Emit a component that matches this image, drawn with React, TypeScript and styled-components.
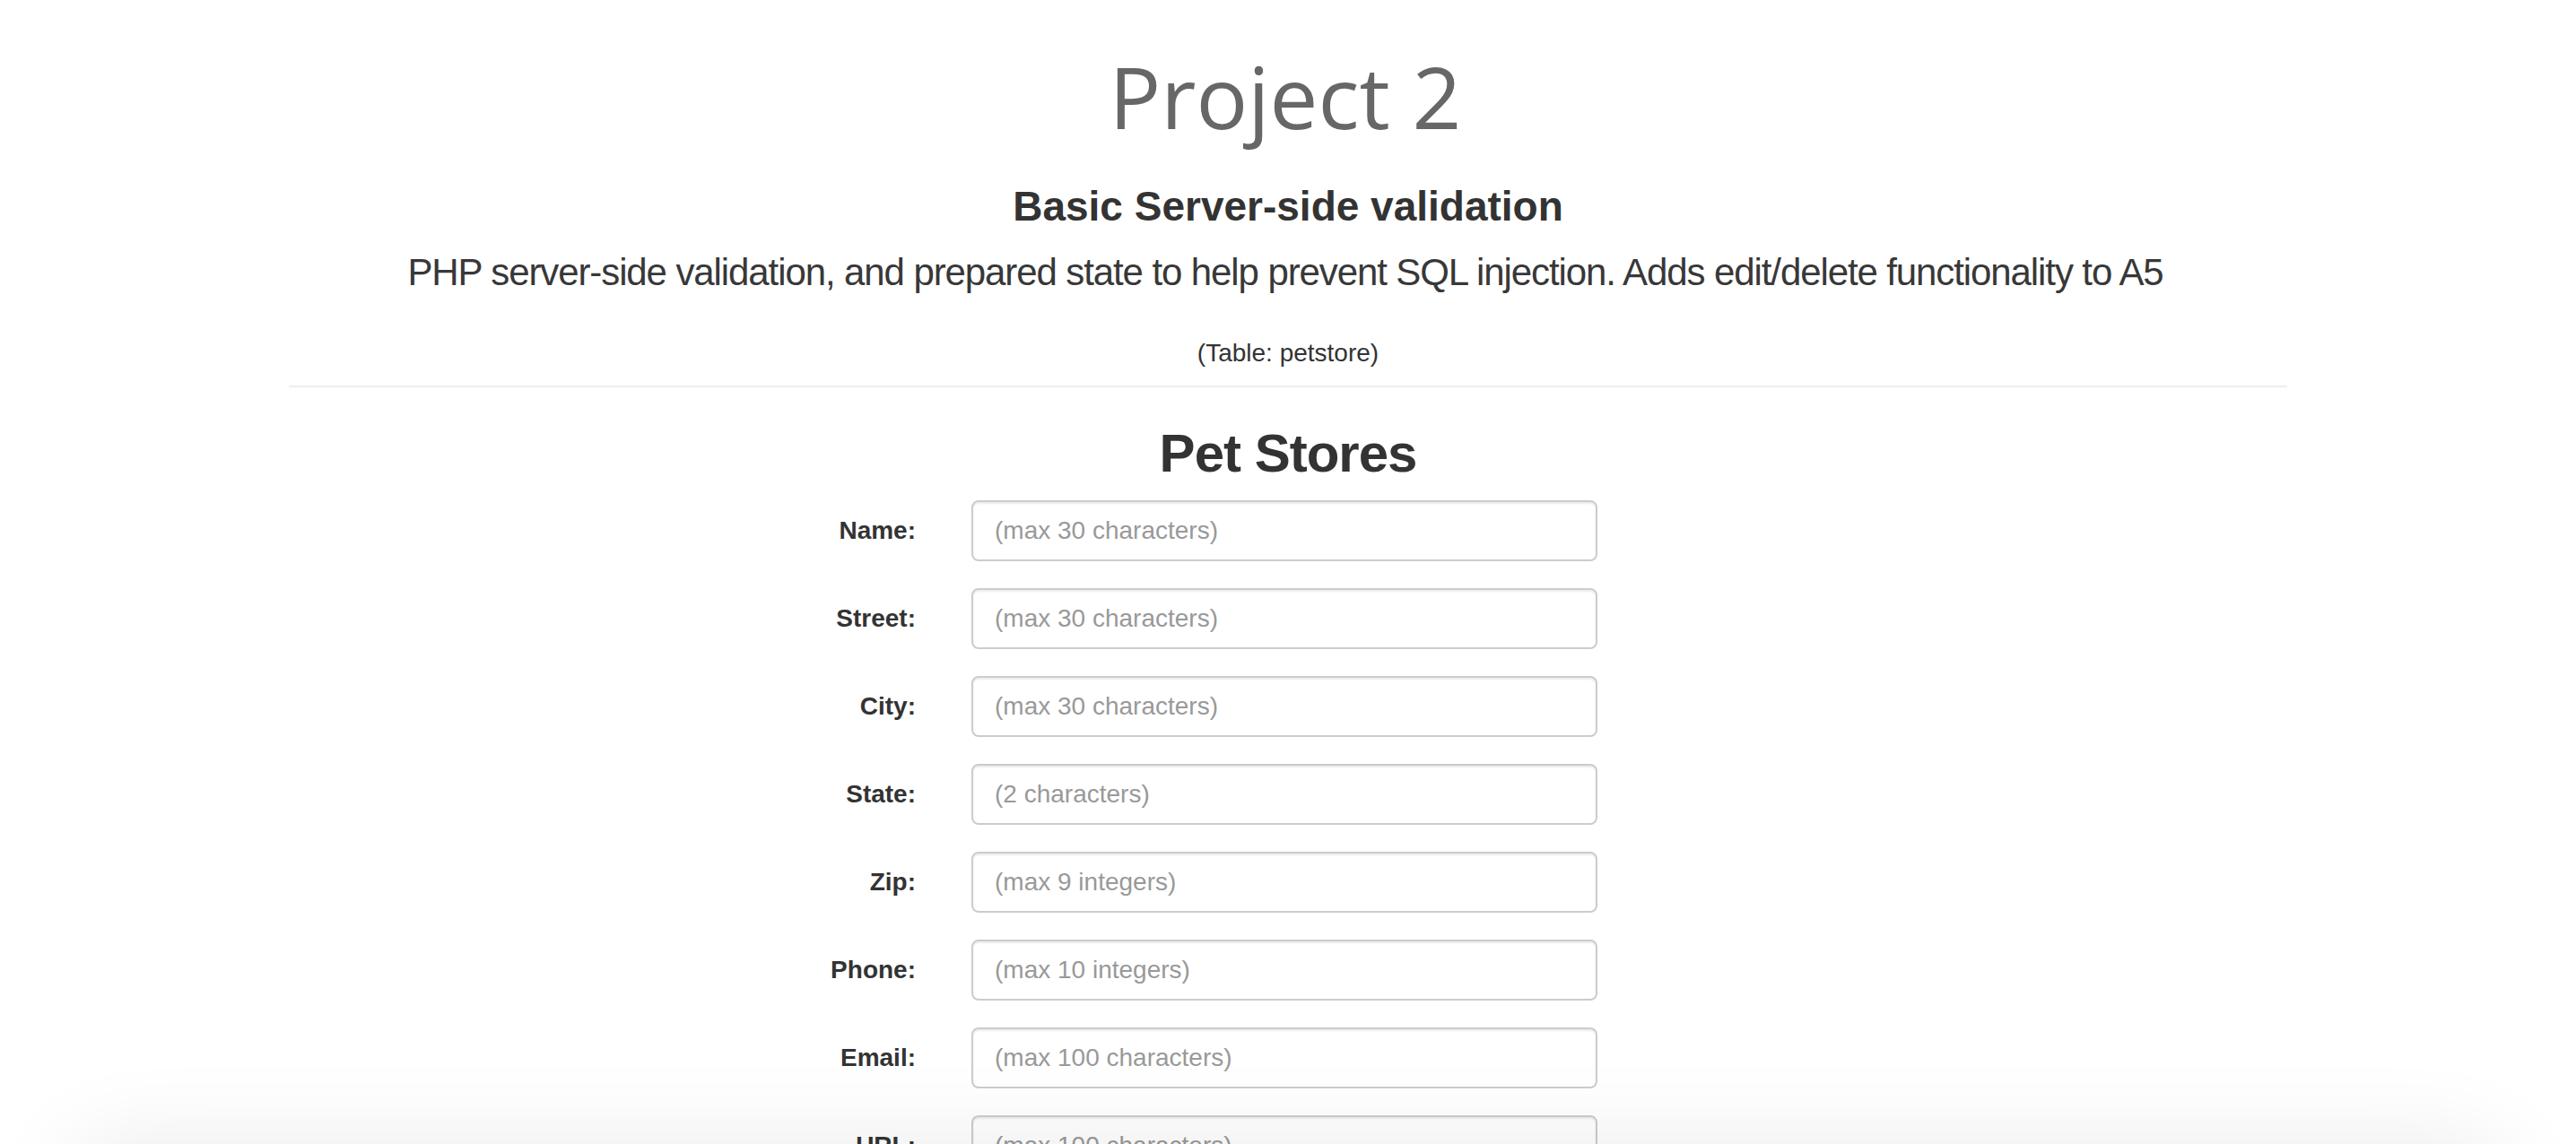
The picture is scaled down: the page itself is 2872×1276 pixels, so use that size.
import React from 'react';
import styled, { createGlobalStyle } from 'styled-components';

const fields = [
  { label: 'Name:', hint: '(max 30 characters)' },
  { label: 'Street:', hint: '(max 30 characters)' },
  { label: 'City:', hint: '(max 30 characters)' },
  { label: 'State:', hint: '(2 characters)' },
  { label: 'Zip:', hint: '(max 9 integers)' },
  { label: 'Phone:', hint: '(max 10 integers)' },
  { label: 'Email:', hint: '(max 100 characters)' },
  { label: 'URL:', hint: '(max 100 characters)' },
  { label: 'YTD Sales:', hint: '(max 10 digits, no commas)' },
];

const App: React.FC = () => (
  <>
    <GlobalStyle />
    <Page>
      <Title>Project 2</Title>
      <SubTitle>Basic Server-side validation</SubTitle>
      <Lead>
        PHP server-side validation, and prepared state to help prevent SQL injection. Adds edit/delete
        functionality to A5
      </Lead>
      <TableNote>(Table: petstore)</TableNote>
      <Rule />
      <SectionTitle>Pet Stores</SectionTitle>
      <Form onSubmit={(e) => e.preventDefault()}>
        {fields.map((f) => (
          <FormRow key={f.label}>
            <Label>{f.label}</Label>
            <Input type="text" placeholder={f.hint} />
          </FormRow>
        ))}
      </Form>
    </Page>
    <BottomShade />
  </>
);

export default App;

const GlobalStyle = createGlobalStyle`
  html, body {
    margin: 0;
    padding: 0;
    background: #fff;
    overflow: hidden;
  }
  body {
    font-family: "Liberation Sans", Arial, sans-serif;
    color: #333;
  }
`;

const Page = styled.div`
  max-width: 2228px;
  margin: 0 auto;
  display: flex;
  flex-direction: column;
  align-items: center;
  text-align: center;
`;

const Title = styled.h1`
  margin: 53px 0 0;
  padding-right: 6px;
  font-family: "Open Sans", "Noto Sans", sans-serif;
  font-weight: 400;
  font-size: 96px;
  line-height: 107px;
  color: #676767;
`;

const SubTitle = styled.h3`
  margin: 45px 0 0;
  font-size: 46px;
  font-weight: 700;
  line-height: 51px;
  color: #333;
`;

const Lead = styled.p`
  margin: 18px 0 0;
  padding-right: 6px;
  font-size: 42px;
  font-weight: 300;
  letter-spacing: -1.1px;
  line-height: 59px;
  color: #383838;
`;

const TableNote = styled.p`
  margin: 41px 0 0;
  font-size: 28px;
  line-height: 39px;
  color: #333;
`;

const Rule = styled.hr`
  align-self: stretch;
  margin: 17px 0 0;
  border: 0;
  border-top: 2px solid #eee;
`;

const SectionTitle = styled.h2`
  margin: 41px 0 0;
  font-size: 60px;
  font-weight: 700;
  letter-spacing: -1px;
  line-height: 66px;
  color: #333;
`;

const Form = styled.form`
  margin: 19px 0 0;
  display: flex;
  flex-direction: column;
  gap: 30px;
  padding-right: 8px;
`;

const FormRow = styled.div`
  display: grid;
  grid-template-columns: 200px 698px 200px;
  column-gap: 62px;
  align-items: center;
`;

const Label = styled.label`
  text-align: right;
  font-size: 28px;
  font-weight: 700;
  color: #333;
`;

const Input = styled.input`
  box-sizing: border-box;
  height: 68px;
  width: 100%;
  padding: 12px 24px;
  border: 2px solid #ccc;
  border-radius: 8px;
  box-shadow: inset 0 2px 2px rgba(0, 0, 0, 0.075);
  font-family: "Liberation Sans", Arial, sans-serif;
  font-size: 28px;
  color: #555;
  background: #fff;
  outline: none;
  &::placeholder {
    color: #999;
  }
`;

const BottomShade = styled.div`
  position: fixed;
  left: 90px;
  right: 90px;
  top: 1290px;
  height: 200px;
  border-radius: 40px;
  background: #ddd;
  box-shadow: 0 0 110px 10px rgba(0, 0, 0, 0.09);
  pointer-events: none;
`;
